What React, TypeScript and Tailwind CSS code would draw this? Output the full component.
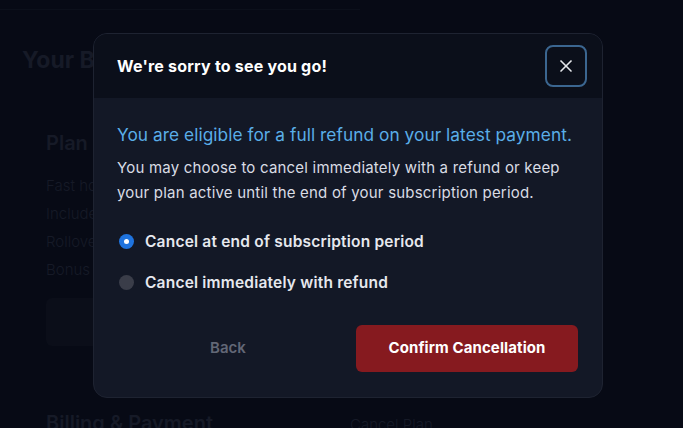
import { X } from "lucide-react";

const planItems = ["Fast hours", "Included credits", "Rollover credits", "Bonus credits"];
const featureItems = [
  "Unlimited generations",
  "Full commercial usage",
  "Add up to member seats",
  "Discounted credit top ups",
  "Concurrent fast jobs",
];

function BackgroundPage() {
  return (
    <div className="h-[428px] bg-[#070a15] text-[#161a27] overflow-hidden">
      <div className="h-[10px] border-b border-[#0c101b] w-[360px]" />
      <div className="px-[22px] pt-[33px]">
        <h1 className="text-[23px] font-bold leading-[34px]">Your Billing</h1>
        <div className="mt-[51px] pl-[24px] grid grid-cols-[304px_1fr]">
          <div>
            <h2 className="text-[20px] font-semibold leading-[30px]">Plan</h2>
            <ul className="mt-[17px] flex flex-col gap-[6px] text-[15px] font-light leading-[22px]">
              {planItems.map((t) => (
                <li key={t}>{t}</li>
              ))}
            </ul>
            <div className="mt-[17px] h-[48px] w-[240px] rounded-md bg-[#0b0e19]" />
          </div>
          <div>
            <h2 className="text-[20px] font-semibold leading-[30px]">Plan Features</h2>
            <ul className="mt-[17px] flex flex-col gap-[6px] text-[15px] font-light leading-[22px] whitespace-nowrap">
              {featureItems.map((t) => (
                <li key={t}>{t}</li>
              ))}
            </ul>
          </div>
        </div>
        <div className="mt-[62px] pl-[24px] grid grid-cols-[304px_1fr] items-baseline">
          <h2 className="text-[20px] font-semibold">Billing &amp; Payment</h2>
          <span className="text-[15px] font-light">Cancel Plan</span>
        </div>
      </div>
    </div>
  );
}

function Radio({ checked, label }: { checked: boolean; label: string }) {
  return (
    <label className="flex items-center gap-[11px]">
      {checked ? (
        <span className="w-[15px] h-[15px] rounded-full bg-[#1f73de] flex items-center justify-center">
          <span className="w-[5px] h-[5px] rounded-full bg-white" />
        </span>
      ) : (
        <span className="w-[15px] h-[15px] rounded-full bg-[#3a3d49]" />
      )}
      <span className="text-[15.5px] font-semibold text-[#e6e8ee] tracking-[0.2px]">{label}</span>
    </label>
  );
}

export default function App() {
  return (
    <div className="relative font-['Inter',sans-serif]">
      <BackgroundPage />
      <div className="absolute left-[93px] top-[33px] w-[510px] h-[365px] rounded-[14px] border border-[#1e2331] bg-[#131826] overflow-hidden flex flex-col">
        <div className="h-[64px] bg-[#0b0f1a] flex items-center justify-between pl-[23px] pr-[15px]">
          <h3 className="text-[16px] font-bold text-white tracking-[0.2px]">We're sorry to see you go!</h3>
          <button className="w-[42px] h-[42px] rounded-lg border-2 border-[#3b6690] flex items-center justify-center text-[#e5e7eb]">
            <X size={20} strokeWidth={2} />
          </button>
        </div>
        <div className="px-[23px] pt-[24px] flex flex-col">
          <p className="text-[17.3px] leading-[26px] text-[#5aaee8] tracking-[0.05px] whitespace-nowrap">
            You are eligible for a full refund on your latest payment.
          </p>
          <p className="mt-[7px] text-[15px] leading-[25px] text-[#d9dce4] tracking-[0.2px]">
            You may choose to cancel immediately with a refund or keep your plan active until the end of your subscription period.
          </p>
          <div className="mt-[25px] flex flex-col gap-[18px] pl-[2px]">
            <Radio checked label="Cancel at end of subscription period" />
            <Radio checked={false} label="Cancel immediately with refund" />
          </div>
          <div className="mt-[30px] flex items-center gap-[17px]">
            <button className="w-[222px] h-[47px] text-[15px] font-semibold text-[#626776]">Back</button>
            <button className="w-[222px] h-[47px] rounded-md bg-[#861a1f] text-[15px] font-bold text-white tracking-[0.1px]">
              Confirm Cancellation
            </button>
          </div>
        </div>
      </div>
    </div>
  );
}
